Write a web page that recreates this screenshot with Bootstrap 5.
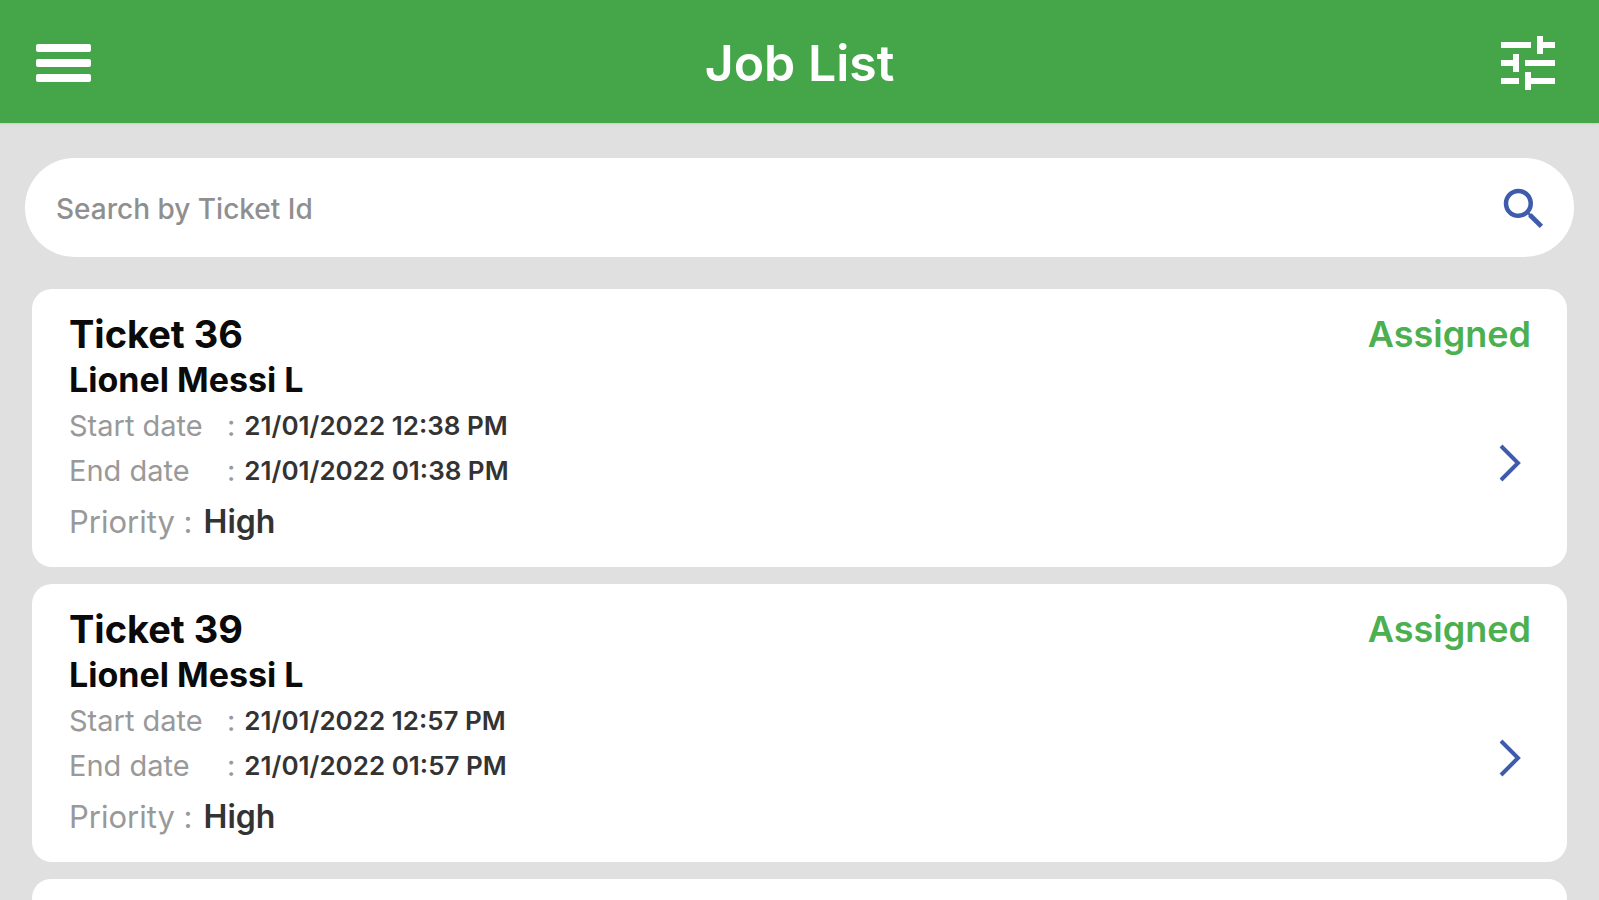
<!DOCTYPE html>
<html lang="en">
<head>
<meta charset="utf-8">
<meta name="viewport" content="width=device-width, initial-scale=1">
<title>Job List</title>
<link href="https://cdn.jsdelivr.net/npm/bootstrap@5.3.0/dist/css/bootstrap.min.css" rel="stylesheet">
<style>
  body { background: #e0e0e0; font-family: Inter, "Liberation Sans", sans-serif; color: #0a0a0a; }
  .app-bar { background: #45a549; height: 123px; padding: 3px 36px 0; color: #fff; box-shadow: 0 1px 2px #bdd0bd; }
  .app-title { font-size: 50px; line-height: 60px; font-weight: 600; }
  .bar-side { flex: 1 1 0; }
  .icon-btn { border: 0; background: none; padding: 0; color: inherit; line-height: 0; }
  .search-box { margin: 35px 25px 32px; height: 99px; padding: 2px 23px 0 31px; background: #fff; }
  .search-box input { font-size: 28px; font-weight: 500; color: #555; }
  .search-box input::placeholder { color: #8f8f8f; opacity: 1; }
  .blue { color: #3f5bab; }
  .jobs { gap: 17px; padding: 0 32px 17px; }
  .job { background: #fff; border: 0; border-radius: 20px; padding: 22px 36px 16px 37px; }
  .job-id, .job-state { font-size: 38px; line-height: 46px; font-weight: 700; }
  .job-state { color: #4caf50; font-weight: 600; font-size: 36px; }
  .job-name { font-size: 34px; line-height: 46px; font-weight: 700; }
  .job-row { font-size: 29px; line-height: 45px; color: #999; }
  .job-row dt { width: 158px; font-weight: 400; }
  .job-row dd, .job-priority dd { color: #333; font-weight: 600; }
  .job-row dd { margin-left: 9px; font-size: 26px; }
  .job-priority { font-size: 31px; line-height: 58px; color: #999; }
  .job-priority dt { font-weight: 400; }
  .job-priority dd { margin-left: 11px; font-size: 32px; }
  .chevron { padding-top: 18px; margin-right: 6px; }
</style>
</head>
<body>
<header class="app-bar d-flex align-items-center">
  <div class="bar-side d-flex">
    <button class="icon-btn" type="button" aria-label="Menu">
      <svg width="55" height="39" viewBox="0 0 55 39" fill="currentColor"><rect width="55" height="8" rx="2"/><rect y="15" width="55" height="8" rx="2"/><rect y="30" width="55" height="8" rx="2"/></svg>
    </button>
  </div>
  <h1 class="app-title m-0">Job List</h1>
  <div class="bar-side d-flex justify-content-end">
    <button class="icon-btn me-2" type="button" aria-label="Filter">
      <svg width="54" height="54" viewBox="3 3 18 18" fill="currentColor"><path d="M3 17v2h6v-2H3zM3 5v2h10V5H3zm10 16v-2h8v-2h-8v-2h-2v6h2zM7 9v2H3v2h4v2h2V9H7zm14 4v-2H11v2h10zm-6-4h2V7h4V5h-4V3h-2v6z"/></svg>
    </button>
  </div>
</header>
<main>
  <form class="search-box rounded-pill d-flex align-items-center" role="search">
    <input class="form-control border-0 shadow-none bg-transparent p-0" type="text" aria-label="Search by Ticket Id" placeholder="Search by Ticket Id">
    <button class="icon-btn blue" type="button" aria-label="Search">
      <svg width="54" height="54" viewBox="0 0 24 24" fill="currentColor"><path d="M15.5 14h-.79l-.28-.27C15.41 12.59 16 11.11 16 9.500 16 5.910 13.090 3 9.500 3S3 5.910 3 9.500 5.910 16 9.500 16c1.610 0 3.090-.59 4.230-1.570l.27.28v.79l5 4.990L20.490 19l-4.990-5zm-6 0C7.010 14 5 11.990 5 9.500S7.010 5 9.500 5 14 7.010 14 9.500 11.990 14 9.500 14z"/></svg>
    </button>
  </form>
  <div class="jobs d-flex flex-column">
    <article class="job d-flex justify-content-between">
      <div>
        <h2 class="job-id m-0">Ticket 36</h2>
        <h3 class="job-name m-0">Lionel Messi L</h3>
        <dl class="m-0">
          <div class="job-row d-flex"><dt>Start date</dt><span>:</span><dd class="mb-0">21/01/2022 12:38 PM</dd></div>
          <div class="job-row d-flex"><dt>End date</dt><span>:</span><dd class="mb-0">21/01/2022 01:38 PM</dd></div>
          <div class="job-priority d-flex"><dt>Priority :</dt><dd class="mb-0">High</dd></div>
        </dl>
      </div>
      <div class="d-flex flex-column align-items-end">
        <div class="job-state">Assigned</div>
        <button class="icon-btn blue chevron my-auto" type="button" aria-label="Open ticket 36"><svg width="32" height="40" viewBox="0 0 32 40" fill="none" stroke="currentColor" stroke-width="4"><path d="M8 3l17 17L8 37"/></svg></button>
      </div>
    </article>
    <article class="job d-flex justify-content-between">
      <div>
        <h2 class="job-id m-0">Ticket 39</h2>
        <h3 class="job-name m-0">Lionel Messi L</h3>
        <dl class="m-0">
          <div class="job-row d-flex"><dt>Start date</dt><span>:</span><dd class="mb-0">21/01/2022 12:57 PM</dd></div>
          <div class="job-row d-flex"><dt>End date</dt><span>:</span><dd class="mb-0">21/01/2022 01:57 PM</dd></div>
          <div class="job-priority d-flex"><dt>Priority :</dt><dd class="mb-0">High</dd></div>
        </dl>
      </div>
      <div class="d-flex flex-column align-items-end">
        <div class="job-state">Assigned</div>
        <button class="icon-btn blue chevron my-auto" type="button" aria-label="Open ticket 39"><svg width="32" height="40" viewBox="0 0 32 40" fill="none" stroke="currentColor" stroke-width="4"><path d="M8 3l17 17L8 37"/></svg></button>
      </div>
    </article>
    <article class="job"></article>
  </div>
</main>
<script src="https://cdn.jsdelivr.net/npm/bootstrap@5.3.0/dist/js/bootstrap.bundle.min.js"></script>
</body>
</html>
